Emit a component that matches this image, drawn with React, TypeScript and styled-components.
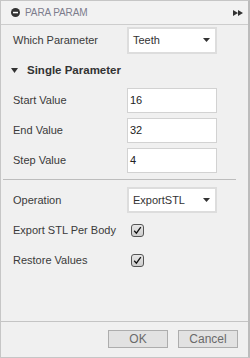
import React from "react";
import styled, { createGlobalStyle } from "styled-components";

const Global = createGlobalStyle`
  html, body {
    margin: 0;
    padding: 0;
    background: #f0f0f0;
  }
  * {
    box-sizing: border-box;
  }
`;

const Dialog = styled.div`
  width: 250px;
  height: 358px;
  display: flex;
  flex-direction: column;
  background: #f0f0f0;
  border: 1px solid #c6c6c6;
  border-right: 2px solid #bcbcbc;
  font-family: "Liberation Sans", Arial, sans-serif;
  color: #3a3a3a;
`;

const Header = styled.div`
  height: 24px;
  display: flex;
  align-items: center;
  padding: 0 5px 0 10px;
  border-bottom: 1px solid #cdcdcd;
  background: #f2f2f2;
`;

const Title = styled.span`
  flex: 1;
  margin-left: 5px;
  font-size: 10px;
  color: #7c7c8c;
  letter-spacing: -0.1px;
`;

const Body = styled.div`
  flex: 1;
  display: flex;
  flex-direction: column;
  padding-left: 12px;
`;

const Row = styled.div`
  height: 30px;
  display: grid;
  grid-template-columns: 114px 90px;
  align-items: center;
`;

const Label = styled.span`
  font-size: 11px;
  color: #3a3a3a;
`;

const Heading = styled.div`
  height: 30px;
  display: flex;
  align-items: center;
  gap: 9px;
  margin-left: -2px;
  font-size: 11.5px;
  font-weight: bold;
  color: #333;
`;

const Select = styled.div<{ $h: number }>`
  height: ${({ $h }) => $h}px;
  display: flex;
  align-items: center;
  justify-content: space-between;
  padding: 0 5px 0 4px;
  background: #fff;
  border: 2px solid #dddddd;
  font-size: 11px;
  color: #333;
`;

const Input = styled.div`
  height: 25px;
  display: flex;
  align-items: center;
  padding-left: 2px;
  background: #fff;
  border: 1px solid #d2d2d2;
  font-size: 11px;
  color: #222;
`;

const Check = styled.div`
  width: 13px;
  height: 13px;
  margin-left: 4px;
  border: 1px solid #555;
  border-radius: 3px;
  background: linear-gradient(#e6e6e6, #cdcdcd);
  display: flex;
  align-items: center;
  justify-content: center;
`;

const Separator = styled.div`
  height: 1px;
  width: 233px;
  margin: 4px 0 5px -10px;
  background: #bdbdbd;
`;

const Footer = styled.div`
  height: 36px;
  display: flex;
  justify-content: flex-end;
  align-items: flex-start;
  gap: 10px;
  padding: 8px 10px 0 0;
  border-top: 1px solid #c4c4c4;
`;

const Button = styled.button`
  width: 60px;
  height: 18px;
  padding: 0;
  background: #e2e2e2;
  border: 1px solid #adadad;
  font-family: "Liberation Sans", Arial, sans-serif;
  font-size: 12px;
  color: #6a6a6a;
  line-height: 16px;
`;

const Caret = () => (
  <svg width="7" height="4" viewBox="0 0 7 4">
    <path d="M0 0h7L3.5 4z" fill="#333" />
  </svg>
);

const MinusCircle = () => (
  <svg width="9" height="9" viewBox="0 0 9 9">
    <circle cx="4.5" cy="4.5" r="4.5" fill="#333" />
    <rect x="2" y="3.8" width="5" height="1.5" fill="#fff" />
  </svg>
);

const Forward = () => (
  <svg width="10" height="6" viewBox="0 0 10 6">
    <path d="M0 0l5 3-5 3z M5 0l5 3-5 3z" fill="#333" />
  </svg>
);

const Tick = () => (
  <svg width="9" height="9" viewBox="0 0 9 9">
    <path d="M1.2 4.8L3.4 7.2L7.8 1.2" fill="none" stroke="#111" strokeWidth="1.3" />
  </svg>
);

const DownTriangle = () => (
  <svg width="7" height="5" viewBox="0 0 7 5">
    <path d="M0 0h7L3.5 5z" fill="#333" />
  </svg>
);

const values = [
  { label: "Start Value", value: "16" },
  { label: "End Value", value: "32" },
  { label: "Step Value", value: "4" },
];

export default function App() {
  return (
    <>
      <Global />
      <Dialog>
        <Header>
          <MinusCircle />
          <Title>PARA PARAM</Title>
          <Forward />
        </Header>
        <Body>
          <Row>
            <Label>Which Parameter</Label>
            <Select $h={27}>
              Teeth
              <Caret />
            </Select>
          </Row>
          <Heading>
            <DownTriangle />
            Single Parameter
          </Heading>
          {values.map((v) => (
            <Row key={v.label}>
              <Label>{v.label}</Label>
              <Input>{v.value}</Input>
            </Row>
          ))}
          <Separator />
          <Row>
            <Label>Operation</Label>
            <Select $h={26}>
              ExportSTL
              <Caret />
            </Select>
          </Row>
          <Row>
            <Label>Export STL Per Body</Label>
            <Check>
              <Tick />
            </Check>
          </Row>
          <Row>
            <Label>Restore Values</Label>
            <Check>
              <Tick />
            </Check>
          </Row>
        </Body>
        <Footer>
          <Button>OK</Button>
          <Button>Cancel</Button>
        </Footer>
      </Dialog>
    </>
  );
}
